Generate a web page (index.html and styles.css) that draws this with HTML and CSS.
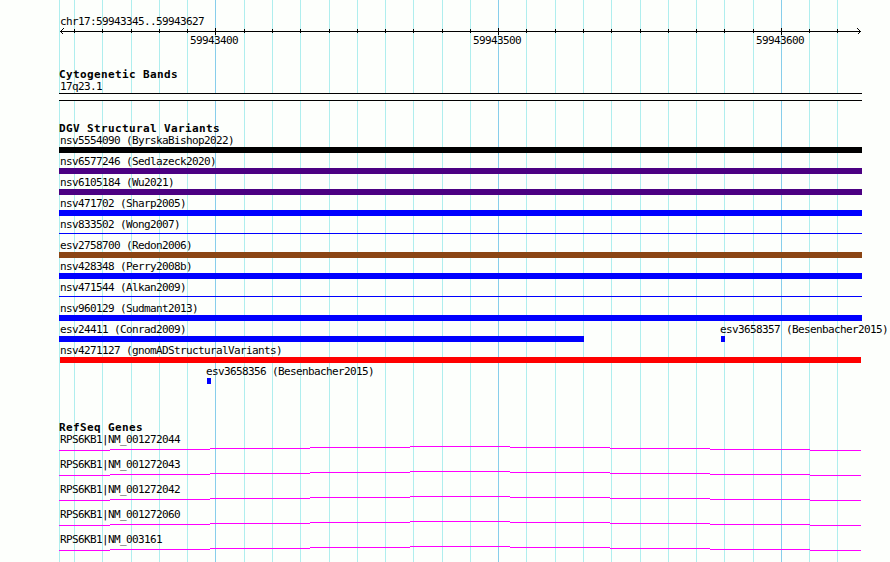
FILE: index.html
```html
<!DOCTYPE html>
<html lang="en">
<head>
<meta charset="utf-8">
<title>chr17:59943345..59943627</title>
<link rel="stylesheet" href="styles.css">
</head>
<body>
<svg class="grid" width="890" height="562" aria-hidden="true" shape-rendering="crispEdges">
  <path class="minor" d="M59.5 0V562M74.5 0V562M102.5 0V562M131.5 0V562M159.5 0V562M187.5 0V562M244.5 0V562M272.5 0V562M300.5 0V562M329.5 0V562M357.5 0V562M385.5 0V562M413.5 0V562M442.5 0V562M470.5 0V562M526.5 0V562M555.5 0V562M583.5 0V562M611.5 0V562M640.5 0V562M668.5 0V562M696.5 0V562M724.5 0V562M753.5 0V562M809.5 0V562M837.5 0V562"/>
  <path class="major" d="M215.5 0V562M498.5 0V562M781.5 0V562"/>
</svg>
<svg class="defs" width="0" height="0" aria-hidden="true">
  <symbol id="intron" viewBox="0 0 803 5">
    <path d="M0 4.5H51M51 3.5H151M151 2.5H251M251 1.5H351M351 .5H451M451 1.5H551M551 2.5H651M651 3.5H751M751 4.5H802"/>
  </symbol>
</svg>
<main class="browser">
  <section class="ruler">
    <div class="label">chr17:59943345..59943627</div>
    <svg class="axis" width="803" height="7" shape-rendering="crispEdges">
      <path d="M1 3.5H802M15.5 1V5M43.5 1V5M72.5 1V5M100.5 1V5M128.5 1V5M156.5 0V7M185.5 1V5M213.5 1V5M241.5 1V5M270.5 1V5M298.5 1V5M326.5 1V5M354.5 1V5M383.5 1V5M411.5 1V5M439.5 0V7M467.5 1V5M496.5 1V5M524.5 1V5M552.5 1V5M581.5 1V5M609.5 1V5M637.5 1V5M665.5 1V5M694.5 1V5M722.5 0V7M750.5 1V5M778.5 1V5"/>
      <path d="M4.5 .5L1.5 3.5L4.5 6.5M798.5 .5L801.5 3.5L798.5 6.5"/>
    </svg>
    <div class="numbers"><span>59943400</span><span>59943500</span><span>59943600</span></div>
  </section>
  <section class="cytobands">
    <h2>Cytogenetic Bands</h2>
    <div class="label">17q23.1</div>
    <div class="band"></div>
  </section>
  <section class="variants">
    <h2>DGV Structural Variants</h2>
    <div class="row"><div class="label">nsv5554090 (ByrskaBishop2022)</div><div class="bar black"></div></div>
    <div class="row"><div class="label">nsv6577246 (Sedlazeck2020)</div><div class="bar indigo"></div></div>
    <div class="row"><div class="label">nsv6105184 (Wu2021)</div><div class="bar indigo"></div></div>
    <div class="row"><div class="label">nsv471702 (Sharp2005)</div><div class="bar blue"></div></div>
    <div class="row"><div class="label">nsv833502 (Wong2007)</div><div class="bar blue thin"></div></div>
    <div class="row"><div class="label">esv2758700 (Redon2006)</div><div class="bar brown"></div></div>
    <div class="row"><div class="label">nsv428348 (Perry2008b)</div><div class="bar blue"></div></div>
    <div class="row"><div class="label">nsv471544 (Alkan2009)</div><div class="bar blue thin"></div></div>
    <div class="row"><div class="label">nsv960129 (Sudmant2013)</div><div class="bar blue"></div></div>
    <div class="row split">
      <div class="conrad"><div class="label">esv24411 (Conrad2009)</div><div class="bar blue"></div></div>
      <div class="short"><div class="label">esv3658357 (Besenbacher2015)</div><div class="bar blue small"></div></div>
    </div>
    <div class="row"><div class="label">nsv4271127 (gnomADStructuralVariants)</div><div class="bar red"></div></div>
    <div class="row indented short"><div class="label">esv3658356 (Besenbacher2015)</div><div class="bar blue small"></div></div>
  </section>
  <section class="genes">
    <h2>RefSeq Genes</h2>
    <div class="gene"><div class="label">RPS6KB1|NM_001272044</div><svg class="intron" width="803" height="5" shape-rendering="crispEdges"><use href="#intron"/></svg></div>
    <div class="gene"><div class="label">RPS6KB1|NM_001272043</div><svg class="intron" width="803" height="5" shape-rendering="crispEdges"><use href="#intron"/></svg></div>
    <div class="gene"><div class="label">RPS6KB1|NM_001272042</div><svg class="intron" width="803" height="5" shape-rendering="crispEdges"><use href="#intron"/></svg></div>
    <div class="gene"><div class="label">RPS6KB1|NM_001272060</div><svg class="intron" width="803" height="5" shape-rendering="crispEdges"><use href="#intron"/></svg></div>
    <div class="gene"><div class="label">RPS6KB1|NM_003161</div><svg class="intron" width="803" height="5" shape-rendering="crispEdges"><use href="#intron"/></svg></div>
  </section>
</main>
</body>
</html>
```
FILE: styles.css
```css
* { box-sizing: border-box; }
body {
  margin: 0;
  height: 562px;
  overflow: hidden;
  background: #fdfffc;
  color: #000;
  font: 11px/13px "DejaVu Sans Mono", monospace;
}
svg { display: block; fill: none; stroke-width: 1; }
.grid { position: absolute; left: 0; top: 0; }
.grid .minor { stroke: #afeeee; }
.grid .major { stroke: #87ceeb; }
.defs { position: absolute; }
.browser {
  position: relative;
  width: 803px;
  margin-left: 59px;
  padding-top: 15px;
}
h2 {
  margin: 0;
  height: 12px;
  font-size: 11px;
  line-height: 13px;
  font-weight: bold;
  letter-spacing: 0.378px;
  white-space: nowrap;
}
.label {
  height: 13px;
  padding-left: 1px;
  letter-spacing: -0.622px;
  white-space: nowrap;
}
.ruler { height: 53px; }
.axis { stroke: #000; }
.numbers {
  display: flex;
  gap: 235px;
  margin-top: -1px;
  padding-left: 131px;
  letter-spacing: -0.622px;
}
.numbers span { width: 48px; }
.cytobands { height: 54px; }
.band {
  height: 8px;
  border: solid #000;
  border-width: 1px 0;
  background: #fdfffc;
}
.variants { height: 299px; }
.row { height: 21px; }
.bar { height: 6px; }
.thin { height: 1px; margin-top: 2px; }
.black { background: #000; }
.indigo { background: #4b0082; }
.blue { background: #00f; }
.brown { background: #8b4513; }
.red { background: #f00; margin: 0 1px; }
.small { width: 4px; margin-left: 1px; }
.split { display: flex; }
.split > div { flex: none; }
.split .label { width: 0; }
.conrad { width: 525px; margin-right: 136px; }
.indented { padding-left: 147px; }
.short .label { padding-left: 0; }
.gene { height: 25px; }
.intron { stroke: #f0f; }
```
